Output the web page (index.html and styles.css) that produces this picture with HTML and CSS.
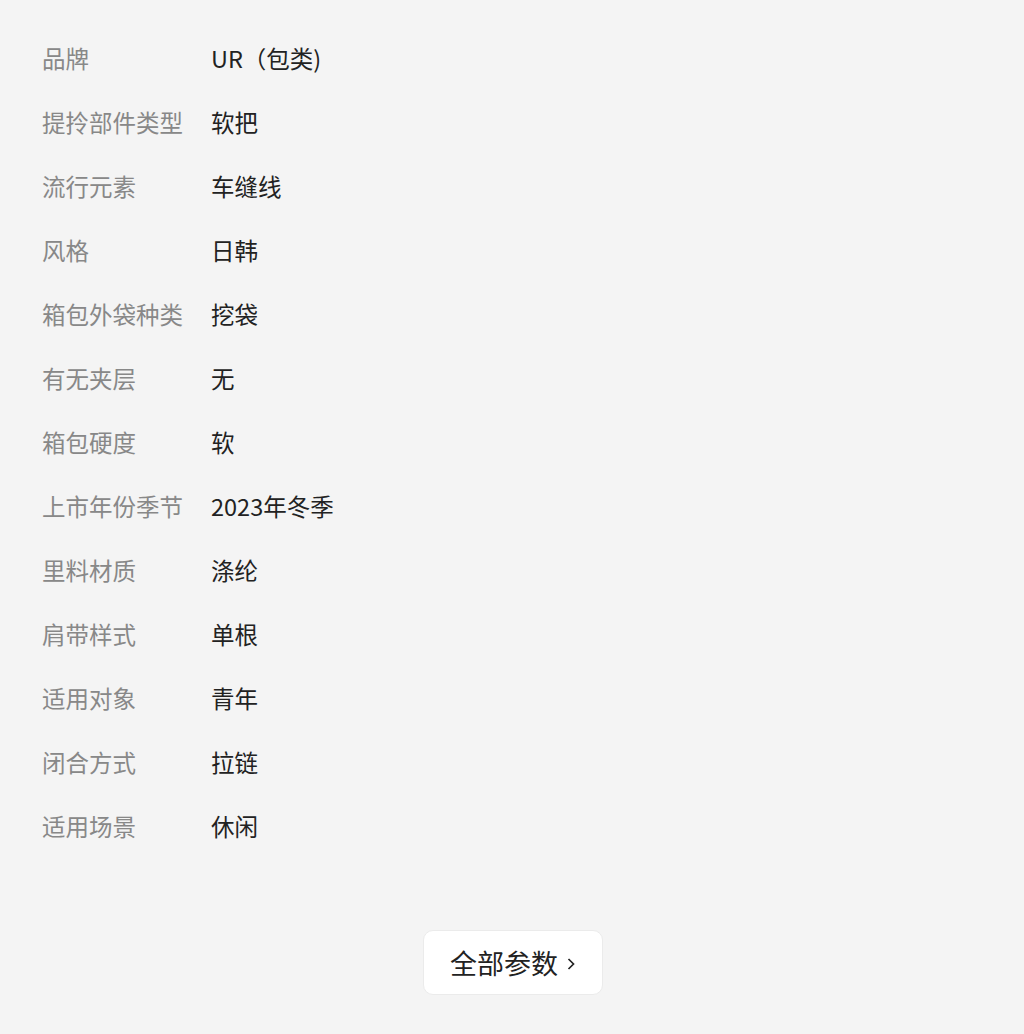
FILE: index.html
```html
<!DOCTYPE html>
<html lang="zh-CN">
<head>
    <meta charset="UTF-8">
    <meta name="viewport" content="width=device-width, initial-scale=1.0">
    <title>商品参数</title>
    <link rel="stylesheet" href="styles.css">
</head>
<body>
    <div class="params">
        <div class="param-row"><span class="param-label">品牌</span><span class="param-value">UR（包类)</span></div>
        <div class="param-row"><span class="param-label">提拎部件类型</span><span class="param-value">软把</span></div>
        <div class="param-row"><span class="param-label">流行元素</span><span class="param-value">车缝线</span></div>
        <div class="param-row"><span class="param-label">风格</span><span class="param-value">日韩</span></div>
        <div class="param-row"><span class="param-label">箱包外袋种类</span><span class="param-value">挖袋</span></div>
        <div class="param-row"><span class="param-label">有无夹层</span><span class="param-value">无</span></div>
        <div class="param-row"><span class="param-label">箱包硬度</span><span class="param-value">软</span></div>
        <div class="param-row"><span class="param-label">上市年份季节</span><span class="param-value">2023年冬季</span></div>
        <div class="param-row"><span class="param-label">里料材质</span><span class="param-value">涤纶</span></div>
        <div class="param-row"><span class="param-label">肩带样式</span><span class="param-value">单根</span></div>
        <div class="param-row"><span class="param-label">适用对象</span><span class="param-value">青年</span></div>
        <div class="param-row"><span class="param-label">闭合方式</span><span class="param-value">拉链</span></div>
        <div class="param-row"><span class="param-label">适用场景</span><span class="param-value">休闲</span></div>
    </div>
    <div class="more">
        <button class="more-btn">全部参数<svg class="chevron" width="10" height="16" viewBox="0 0 10 16"><path d="M2.5 3 L7.5 8 L2.5 13" fill="none" stroke="#222" stroke-width="1.7"/></svg></button>
    </div>
</body>
</html>
```

FILE: styles.css
```css
body {
    margin: 0;
    background-color: #f4f4f4;
    font-family: "Noto Sans CJK SC", "Noto Sans", sans-serif;
    color: #222;
}
.params {
    padding: 26px 0 0 42px;
}
.param-row {
    display: flex;
    height: 64px;
    align-items: center;
    font-size: 23.5px;
}
.param-label {
    width: 169px;
    color: #888;
}
.param-value {
    color: #222;
}
.more {
    display: flex;
    justify-content: center;
    padding-top: 72px;
}
.more-btn {
    width: 180px;
    height: 65px;
    margin-left: 2px;
    display: flex;
    align-items: center;
    justify-content: center;
    gap: 8px;
    background-color: #fff;
    border: 1px solid #ebebeb;
    border-radius: 10px;
    font-family: inherit;
    font-size: 27px;
    color: #222;
    padding: 0;
}
.chevron {
    margin-top: 2px;
}
```
